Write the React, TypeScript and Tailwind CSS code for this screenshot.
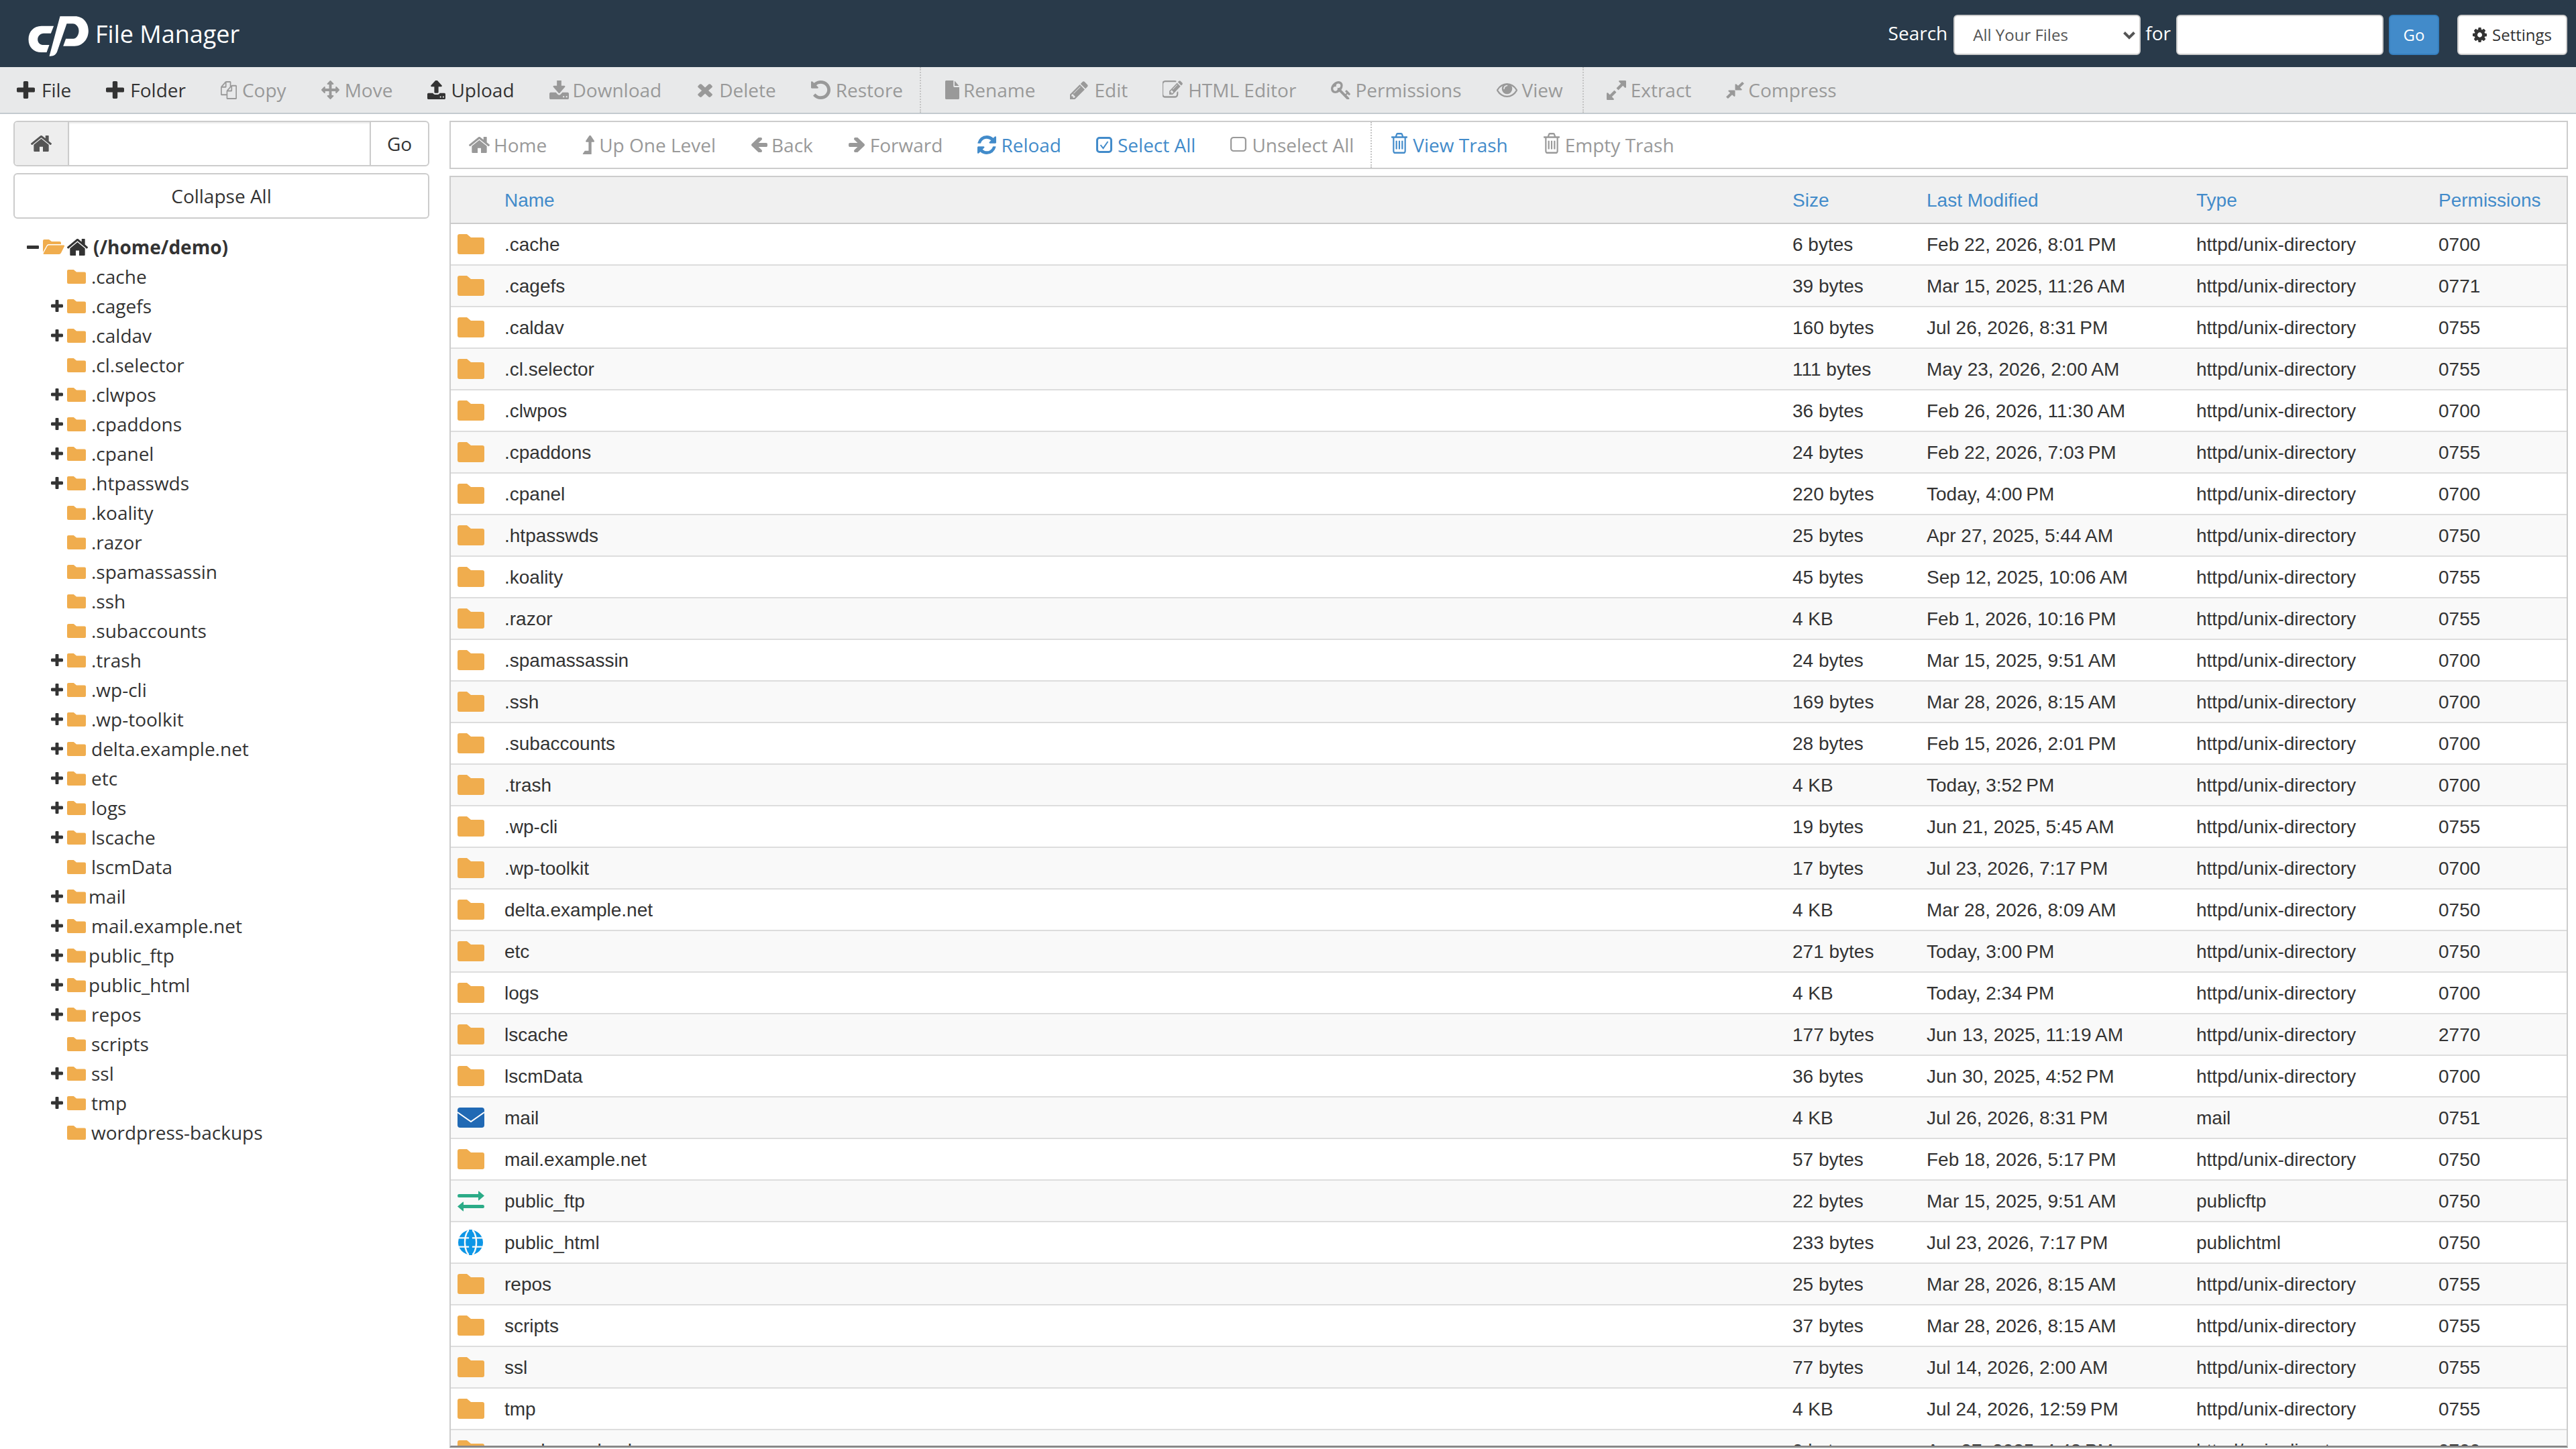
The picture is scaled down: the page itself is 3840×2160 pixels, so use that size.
const FOLDER = 'M0 3Q0 0 3 0H14L20 5H37Q40 5 40 8V27Q40 30 37 30H3Q0 30 0 27Z';

// Font Awesome 4 paths, each with a viewBox cropped tight to the glyph
const icons: Record<string, [string, string]> = {
  plus: ['192 128 1408 1408', 'M1600 736v192q0 40-28 68t-68 28h-416v416q0 40-28 68t-68 28h-192q-40 0-68-28t-28-68v-416h-416q-40 0-68-28t-28-68v-192q0-40 28-68t68-28h416v-416q0-40 28-68t68-28h192q40 0 68 28t28 68v416h416q40 0 68 28t28 68z'],
  copy: ['0 0 1792 1792', 'M1696 384q40 0 68 28t28 68v1216q0 40-28 68t-68 28h-960q-40 0-68-28t-28-68v-288h-544q-40 0-68-28t-28-68v-672q0-40 20-88t48-76l408-408q28-28 76-48t88-20h416q40 0 68 28t28 68v328q68-40 128-40h416zm-544 213l-299 299h299v-299zm-640-384l-299 299h299v-299zm196 647l316-316v-416h-384v416q0 40-28 68t-68 28h-416v640h512v-256q0-40 20-88t48-76zm956 804v-1152h-384v416q0 40-28 68t-68 28h-416v640h896z'],
  move: ['0 0 1792 1792', 'M1792 896q0 26-19 45l-256 256q-19 19-45 19t-45-19-19-45v-128h-384v384h128q26 0 45 19t19 45-19 45l-256 256q-19 19-45 19t-45-19l-256-256q-19-19-19-45t19-45 45-19h128v-384h-384v128q0 26-19 45t-45 19-45-19l-256-256q-19-19-19-45t19-45l256-256q19-19 45-19t45 19 19 45v128h384v-384h-128q-26 0-45-19t-19-45 19-45l256-256q19-19 45-19t45 19l256 256q19 19 19 45t-19 45-45 19h-128v384h384v-128q0-26 19-45t45-19 45 19l256 256q19 19 19 45z'],
  upload: ['64 128 1664 1536', 'M1344 1472q0-26-19-45t-45-19-45 19-19 45 19 45 45 19 45-19 19-45zm256 0q0-26-19-45t-45-19-45 19-19 45 19 45 45 19 45-19 19-45zm128-224v320q0 40-28 68t-68 28h-1472q-40 0-68-28t-28-68v-320q0-40 28-68t68-28h427q21 56 70.500 92t110.500 36h256q61 0 110.500-36t70.500-92h427q40 0 68 28t28 68zm-325-648q-17 40-59 40h-256v448q0 26-19 45t-45 19h-256q-26 0-45-19t-19-45v-448h-256q-42 0-59-40-17-39 14-69l448-448q18-19 45-19t45 19l448 448q31 30 14 69z'],
  download: ['64 128 1664 1408', 'M1344 1344q0-26-19-45t-45-19-45 19-19 45 19 45 45 19 45-19 19-45zm256 0q0-26-19-45t-45-19-45 19-19 45 19 45 45 19 45-19 19-45zm128-224v320q0 40-28 68t-68 28h-1472q-40 0-68-28t-28-68v-320q0-40 28-68t68-28h465l135 136q58 56 136 56t136-56l136-136h464q40 0 68 28t28 68zm-325-569q17 41-14 70l-448 448q-18 19-45 19t-45-19l-448-448q-31-29-14-70 17-39 59-39h256v-448q0-26 19-45t45-19h256q26 0 45 19t19 45v448h256q42 0 59 39z'],
  times: ['182 238 1310 1316', 'M1490 1322q0 40-28 68l-136 136q-28 28-68 28t-68-28l-294-294-294 294q-28 28-68 28t-68-28l-136-136q-28-28-28-68t28-68l294-294-294-294q-28-28-28-68t28-68l136-136q28-28 68-28t68 28l294 294 294-294q28-28 68-28t68 28l136 136q28 28 28 68t-28 68l-294 294 294 294q28 28 28 68z'],
  undo: ['128 128 1536 1536', 'M1664 896q0 156-61 298t-164 245-245 164-298 61q-172 0-327-72.500t-264-204.500q-7-10-6.500-22.500t8.500-20.500l137-138q10-9 25-9 16 2 23 12 73 95 179 147t225 52q104 0 198.500-40.500t163.500-109.500 109.500-163.500 40.500-198.500-40.500-198.500-109.500-163.500-163.500-109.500-198.500-40.500q-98 0-188 35.500t-160 101.500l137 138q31 30 14 69-17 40-59 40h-448q-26 0-45-19t-19-45v-448q0-42 40-59 39-17 69 14l130 129q107-101 244.500-156.500t284.500-55.500q156 0 298 61t245 164 164 245 61 298z'],
  file: ['128 0 1536 1792', 'M1152 512v-472q22 14 36 28l408 408q14 14 28 36h-472zm-128 32q0 40 28 68t68 28h544v1056q0 40-28 68t-68 28h-1344q-40 0-68-28t-28-68v-1600q0-40 28-68t68-28h800v544z'],
  pencil: ['128 128 1536 1536', 'M491 1536l91-91-235-235-91 91v107h128v128h107zm523-928q0-22-22-22-10 0-17 7l-542 542q-7 7-7 17 0 22 22 22 10 0 17-7l542-542q7-7 7-17zm-54-192l416 416-832 832h-416v-416zm683 96q0 53-37 90l-166 166-416-416 166-165q36-38 90-38 53 0 91 38l235 234q37 39 37 91z'],
  edit: ['64 128 1728 1536', 'M888 1184l116-116-152-152-116 116v56h96v96h56zm440-720q-16-16-33 1l-350 350q-17 17-1 33t33-1l350-350q17-17 1-33zm80 594v190q0 119-84.500 203.500t-203.500 84.500h-832q-119 0-203.500-84.500t-84.500-203.500v-832q0-119 84.500-203.500t203.500-84.500h832q63 0 117 25 15 7 18 23 3 17-9 29l-49 49q-14 14-32 8-23-6-45-6h-832q-66 0-113 47t-47 113v832q0 66 47 113t113 47h832q66 0 113-47t47-113v-126q0-13 9-22l64-64q15-15 35-7t20 29zm-96-738l288 288-672 672h-288v-288zm444 132l-92 92-288-288 92-92q28-28 68-28t68 28l152 152q28 28 28 68t-28 68z'],
  key: ['0 128 1683 1536', 'M832 512q0-80-56-136t-136-56-136 56-56 136q0 42 19 83-41-19-83-19-80 0-136 56t-56 136 56 136 136 56 136-56 56-136q0-42-19-83 41 19 83 19 80 0 136-56t56-136zm851 704q0 17-49 66t-66 49q-9 0-28.500-16t-36.500-33-38.500-40-24.500-26l-96 96 220 220q28 28 28 68 0 42-39 81t-81 39q-40 0-68-28l-671-671q-176 131-365 131-163 0-265.500-102.500t-102.500-265.500q0-160 95-313t248-248 313-95q163 0 265.500 102.500t102.500 265.500q0 189-131 365l355 355 96-96q-3-3-26-24.500t-40-38.500-33-36.500-16-28.500q0-17 49-66t66-49q13 0 23 10 6 6 46 44.500t82 79.500 86.500 86 73 78 28.500 41z'],
  eye: ['0 384 1792 1152', 'M1664 960q-152-236-381-353 61 104 61 225 0 185-131.500 316.500t-316.500 131.500-316.500-131.500-131.500-316.500q0-121 61-225-229 117-381 353 133 205 333.500 326.500t434.500 121.500 434.500-121.500 333.500-326.500zm-720-384q0-20-14-34t-34-14q-125 0-214.500 89.500t-89.500 214.500q0 20 14 34t34 14 34-14 14-34q0-86 61-147t147-61q20 0 34-14t14-34zm848 384q0 34-20 69-140 230-376.500 368.500t-499.500 138.500-499.500-139-376.500-368q-20-35-20-69t20-69q140-229 376.500-368t499.500-139 499.500 139 376.500 368q20 35 20 69z'],
  expand: ['128 128 1536 1536', 'M883 1056q0 13-10 23l-332 332 144 144q19 19 19 45t-19 45-45 19h-448q-26 0-45-19t-19-45v-448q0-26 19-45t45-19 45 19l144 144 332-332q10-10 23-10t23 10l114 114q10 10 10 23zm781-864v448q0 26-19 45t-45 19-45-19l-144-144-332 332q-10 10-23 10t-23-10l-114-114q-10-10-10-23t10-23l332-332-144-144q-19-19-19-45t19-45 45-19h448q26 0 45 19t19 45z'],
  compress: ['128 128 1536 1536', 'M896 960v448q0 26-19 45t-45 19-45-19l-144-144-332 332q-10 10-23 10t-23-10l-114-114q-10-10-10-23t10-23l332-332-144-144q-19-19-19-45t19-45 45-19h448q26 0 45 19t19 45zm755-672q0 13-10 23l-332 332 144 144q19 19 19 45t-19 45-45 19h-448q-26 0-45-19t-19-45v-448q0-26 19-45t45-19 45 19l144 144 332-332q10-10 23-10t23 10l114 114q10 10 10 23z'],
  home: ['97 256 1598 1280', 'M1472 992v480q0 26-19 45t-45 19h-384v-384h-256v384h-384q-26 0-45-19t-19-45v-480q0-1 .5-3t.5-3l575-474 575 474q1 2 1 6zm223-69l-62 74q-8 9-21 11h-3q-13 0-21-7l-692-577-692 577q-12 8-24 7-13-2-21-11l-62-74q-8-10-7-23.500t11-21.500l719-599q32-26 76-26t76 26l244 204v-195q0-14 9-23t23-9h192q14 0 23 9t9 23v408l219 182q10 8 11 21.500t-7 23.500z'],
  left: ['128 256 1536 1408', 'M1664 896v128q0 53-32.500 90.500t-84.500 37.500h-704l293 294q38 36 38 90t-38 90l-75 76q-37 37-90 37-52 0-91-37l-651-652q-37-37-37-90 0-52 37-91l651-650q38-38 91-38 52 0 90 38l75 74q38 38 38 91t-38 91l-293 293h704q52 0 84.500 37.500t32.500 90.500z'],
  right: ['64 256 1536 1408', 'M1600 960q0 54-37 91l-651 651q-39 37-91 37-51 0-90-37l-75-75q-38-38-38-91t38-91l293-293h-704q-52 0-84.500-37.500t-32.500-90.500v-128q0-53 32.500-90.500t84.500-37.500h704l-293-294q-38-36-38-90t38-90l75-75q38-38 90-38 53 0 91 38l651 651q37 35 37 90z'],
  up: ['270 64 1130 1376', 'M1395 508q-17 36-58 36h-192v864q0 14-9 23t-23 9h-704q-21 0-29-18-8-20 4-35l160-192q9-11 25-11h320v-640h-192q-40 0-58-37-17-37 9-68l320-384q18-22 49-22t49 22l320 384q27 32 9 69z'],
  refresh: ['128 128 1536 1536', 'M1639 1056q0 5-1 7-64 268-268 434.500t-478 166.500q-146 0-282.500-55t-243.500-157l-129 129q-19 19-45 19t-45-19-19-45v-448q0-26 19-45t45-19h448q26 0 45 19t19 45-19 45l-137 137q71 66 161 102t187 36q134 0 250-65t186-179q11-17 53-117 8-23 30-23h192q13 0 22.500 9.500t9.500 22.500zm25-800v448q0 26-19 45t-45 19h-448q-26 0-45-19t-19-45 19-45l138-138q-148-137-349-137-134 0-250 65t-186 179q-11 17-53 117-8 23-30 23h-199q-13 0-22.500-9.500t-9.500-22.500v-7q65-268 270-434.500t480-166.500q146 0 284 55.500t245 156.500l130-129q19-19 45-19t45 19 19 45z'],
  square: ['0 128 1408 1536', 'M1120 256h-832q-66 0-113 47t-47 113v832q0 66 47 113t113 47h832q66 0 113-47t47-113v-832q0-66-47-113t-113-47zm288 160v832q0 119-84.500 203.500t-203.500 84.500h-832q-119 0-203.500-84.500t-84.500-203.500v-832q0-119 84.500-203.500t203.500-84.500h832q119 0 203.500 84.500t84.500 203.500z'],
  trash: ['128 128 1536 1536', 'M704 736v576q0 14-9 23t-23 9h-64q-14 0-23-9t-9-23v-576q0-14 9-23t23-9h64q14 0 23 9t9 23zm256 0v576q0 14-9 23t-23 9h-64q-14 0-23-9t-9-23v-576q0-14 9-23t23-9h64q14 0 23 9t9 23zm256 0v576q0 14-9 23t-23 9h-64q-14 0-23-9t-9-23v-576q0-14 9-23t23-9h64q14 0 23 9t9 23zm128 724v-948h-896v948q0 22 7 40.500t14.500 27 10.500 8.500h832q3 0 10.500-8.500t14.500-27 7-40.500zm-672-1076h448l-48-117q-7-9-17-11h-317q-10 2-17 11zm928 32v64q0 14-9 23t-23 9h-96v948q0 83-47 143.500t-113 60.500h-832q-66 0-113-58.500t-47-141.500v-952h-96q-14 0-23-9t-9-23v-64q0-14 9-23t23-9h309l70-167q15-37 54-63t79-26h320q40 0 79 26t54 63l70 167h309q14 0 23 9t9 23z'],
  cog: ['128 128 1536 1536', 'M1152 896q0-106-75-181t-181-75-181 75-75 181 75 181 181 75 181-75 75-181zm512-109v222q0 12-8 23t-20 13l-185 28q-19 54-39 91 35 50 107 138 10 12 10 25t-9 23q-27 37-99 108t-94 71q-12 0-26-9l-138-108q-44 23-91 38-16 136-29 186-7 28-36 28h-222q-14 0-24.500-8.500t-11.500-21.500l-28-184q-49-16-90-37l-141 107q-10 9-25 9-14 0-25-11-126-114-165-168-7-10-7-23 0-12 8-23 15-21 51-66.500t54-70.500q-27-50-41-99l-183-27q-13-2-21-12.500t-8-23.500v-222q0-12 8-23t19-13l186-28q14-46 39-92-40-57-107-138-10-12-10-24 0-10 9-23 26-36 98.500-107.500t94.500-71.500q13 0 26 10l138 107q44-23 91-38 16-136 29-186 7-28 36-28h222q14 0 24.500 8.500t11.500 21.500l28 184q49 16 90 37l142-107q9-9 24-9 13 0 25 10 129 119 165 170 7 8 7 22 0 12-8 23-15 21-51 66.500t-54 70.500q26 50 41 98l183 28q13 2 21 12.500t8 23.500z'],
};

function Fa({ name, className }: { name: string; className?: string }) {
  const [box, d] = icons[name];
  return (
    <svg viewBox={box} preserveAspectRatio="none" className={`shrink-0 ${className ?? ''}`} fill="currentColor">
      <path d={d} />
    </svg>
  );
}

function CheckBox({ className }: { className?: string }) {
  return (
    <svg viewBox="0 0 24 24" className={`shrink-0 ${className ?? ''}`} fill="none" stroke="currentColor">
      <rect x="1.5" y="1.5" width="21" height="21" rx="3.500" strokeWidth="3" />
      <path d="M6.500 12l4 5 7-10" strokeWidth="2" />
    </svg>
  );
}

function Folder({ className }: { className?: string }) {
  return (
    <svg viewBox="0 0 40 30" className={`shrink-0 ${className ?? ''}`} fill="#f0ad4e">
      <path d={FOLDER} />
    </svg>
  );
}

function FolderOpen({ className }: { className?: string }) {
  return (
    <svg viewBox="0 0 32 22" className={className} fill="#f0ad4e">
      <path d="M0 2Q0 0 2 0H9L13 3H25Q27 3 27 5V7H9Q6 7 5 10L0 19Z" />
      <path d="M6.500 10Q7 8.500 9 8.500H31Q32.500 8.500 32 10L27 20Q26 22 24 22H2Q0 22 .8 20.500Z" />
    </svg>
  );
}

function Logo() {
  return (
    <svg viewBox="30 20 290 195" className="mt-[8px] h-[65px] w-[97px]" fill="#fff">
      <path d="M150 70L95 70C60 70 37 95 37 130C37 165 60 188 95 188L118 188L130 155L105 155C88 155 78 144 78 130C78 115 90 103 105 103L137 103Z" />
      <path d="M178 27L245 27C280 27 305 55 305 92C305 130 278 160 243 160L192 160L204 127L237 127C252 127 262 110 262 92C262 75 250 60 235 60L208 60L165 185C160 198 150 205 135 205L130 205Z" />
    </svg>
  );
}

type ToolItem = { icon: string; label: string; size: string; active?: boolean; tone?: string };

const actions: { pad: string; items: ToolItem[] }[] = [
  {
    pad: 'pl-[25px] pr-[25px]',
    items: [
      { icon: 'plus', label: 'File', size: 'h-[26px] w-[27px] mr-[10px]', active: true },
      { icon: 'plus', label: 'Folder', size: 'h-[26px] w-[27px] mr-[9px]', active: true },
      { icon: 'copy', label: 'Copy', size: 'h-[27px] w-[24px] mr-[8px]' },
      { icon: 'move', label: 'Move', size: 'h-[28px] w-[27px] mr-[8px]' },
      { icon: 'upload', label: 'Upload', size: 'h-[28px] w-[27px] mr-[8px]', active: true },
      { icon: 'download', label: 'Download', size: 'h-[28px] w-[29px] mr-[6px]' },
      { icon: 'times', label: 'Delete', size: 'h-[22px] w-[24px] mr-[10px]' },
      { icon: 'undo', label: 'Restore', size: 'h-[28px] w-[29px] mr-[8px]' },
    ],
  },
  {
    pad: 'pl-[36px] pr-[29px]',
    items: [
      { icon: 'file', label: 'Rename', size: 'h-[28px] w-[21px] mr-[6px]' },
      { icon: 'pencil', label: 'Edit', size: 'h-[27px] w-[27px] mr-[9px]' },
      { icon: 'edit', label: 'HTML Editor', size: 'h-[28px] w-[30px] mr-[8px]' },
      { icon: 'key', label: 'Permissions', size: 'h-[27px] w-[29px] mr-[7px]' },
      { icon: 'eye', label: 'View', size: 'h-[21px] w-[31px] mr-[7px]' },
    ],
  },
  {
    pad: 'pl-[34px]',
    items: [
      { icon: 'expand', label: 'Extract', size: 'h-[29px] w-[29px] mr-[7px]' },
      { icon: 'compress', label: 'Compress', size: 'h-[25px] w-[27px] mr-[6px]' },
    ],
  },
];

const BLUE = 'text-[#428bca]';

const navLeft: ToolItem[] = [
  { icon: 'home', label: 'Home', size: 'h-[24px] w-[31px] mr-[6px]' },
  { icon: 'up', label: 'Up One Level', size: 'h-[28px] w-[19px] mr-[7px]' },
  { icon: 'left', label: 'Back', size: 'h-[22px] w-[25px] mr-[6px]' },
  { icon: 'right', label: 'Forward', size: 'h-[22px] w-[25px] mr-[8px]' },
  { icon: 'refresh', label: 'Reload', size: 'h-[28px] w-[28px] mr-[7px]', tone: BLUE },
  { icon: 'check', label: 'Select All', size: 'h-[24px] w-[24px] mr-[8px]', tone: BLUE },
  { icon: 'square', label: 'Unselect All', size: 'h-[24px] w-[24px] mr-[8px]' },
];

const navRight: ToolItem[] = [
  { icon: 'trash', label: 'View Trash', size: 'h-[31px] w-[26px] mr-[7px] -mt-[5px]', tone: BLUE },
  { icon: 'trash', label: 'Empty Trash', size: 'h-[31px] w-[26px] mr-[7px] -mt-[5px]' },
];

type TreeItem = { name: string; more?: boolean; tight?: boolean };

const tree: TreeItem[] = [
  { name: '.cache' },
  { name: '.cagefs', more: true },
  { name: '.caldav', more: true },
  { name: '.cl.selector' },
  { name: '.clwpos', more: true },
  { name: '.cpaddons', more: true },
  { name: '.cpanel', more: true },
  { name: '.htpasswds', more: true },
  { name: '.koality' },
  { name: '.razor' },
  { name: '.spamassassin' },
  { name: '.ssh' },
  { name: '.subaccounts' },
  { name: '.trash', more: true },
  { name: '.wp-cli', more: true },
  { name: '.wp-toolkit', more: true },
  { name: 'delta.example.net', more: true },
  { name: 'etc', more: true },
  { name: 'logs', more: true },
  { name: 'lscache', more: true },
  { name: 'lscmData' },
  { name: 'mail', more: true, tight: true },
  { name: 'mail.example.net', more: true },
  { name: 'public_ftp', more: true, tight: true },
  { name: 'public_html', more: true, tight: true },
  { name: 'repos', more: true },
  { name: 'scripts' },
  { name: 'ssl', more: true },
  { name: 'tmp', more: true },
  { name: 'wordpress-backups' },
];

const DIR = 'httpd/unix-directory';

const files: [string, string, string, string, string][] = [
  ['.cache', '6 bytes', 'Feb 22, 2026, 8:01 PM', DIR, '0700'],
  ['.cagefs', '39 bytes', 'Mar 15, 2025, 11:26 AM', DIR, '0771'],
  ['.caldav', '160 bytes', 'Jul 26, 2026, 8:31 PM', DIR, '0755'],
  ['.cl.selector', '111 bytes', 'May 23, 2026, 2:00 AM', DIR, '0755'],
  ['.clwpos', '36 bytes', 'Feb 26, 2026, 11:30 AM', DIR, '0700'],
  ['.cpaddons', '24 bytes', 'Feb 22, 2026, 7:03 PM', DIR, '0755'],
  ['.cpanel', '220 bytes', 'Today, 4:00 PM', DIR, '0700'],
  ['.htpasswds', '25 bytes', 'Apr 27, 2025, 5:44 AM', DIR, '0750'],
  ['.koality', '45 bytes', 'Sep 12, 2025, 10:06 AM', DIR, '0755'],
  ['.razor', '4 KB', 'Feb 1, 2026, 10:16 PM', DIR, '0755'],
  ['.spamassassin', '24 bytes', 'Mar 15, 2025, 9:51 AM', DIR, '0700'],
  ['.ssh', '169 bytes', 'Mar 28, 2026, 8:15 AM', DIR, '0700'],
  ['.subaccounts', '28 bytes', 'Feb 15, 2026, 2:01 PM', DIR, '0700'],
  ['.trash', '4 KB', 'Today, 3:52 PM', DIR, '0700'],
  ['.wp-cli', '19 bytes', 'Jun 21, 2025, 5:45 AM', DIR, '0755'],
  ['.wp-toolkit', '17 bytes', 'Jul 23, 2026, 7:17 PM', DIR, '0700'],
  ['delta.example.net', '4 KB', 'Mar 28, 2026, 8:09 AM', DIR, '0750'],
  ['etc', '271 bytes', 'Today, 3:00 PM', DIR, '0750'],
  ['logs', '4 KB', 'Today, 2:34 PM', DIR, '0700'],
  ['lscache', '177 bytes', 'Jun 13, 2025, 11:19 AM', DIR, '2770'],
  ['lscmData', '36 bytes', 'Jun 30, 2025, 4:52 PM', DIR, '0700'],
  ['mail', '4 KB', 'Jul 26, 2026, 8:31 PM', 'mail', '0751'],
  ['mail.example.net', '57 bytes', 'Feb 18, 2026, 5:17 PM', DIR, '0750'],
  ['public_ftp', '22 bytes', 'Mar 15, 2025, 9:51 AM', 'publicftp', '0750'],
  ['public_html', '233 bytes', 'Jul 23, 2026, 7:17 PM', 'publichtml', '0750'],
  ['repos', '25 bytes', 'Mar 28, 2026, 8:15 AM', DIR, '0755'],
  ['scripts', '37 bytes', 'Mar 28, 2026, 8:15 AM', DIR, '0755'],
  ['ssl', '77 bytes', 'Jul 14, 2026, 2:00 AM', DIR, '0755'],
  ['tmp', '4 KB', 'Jul 24, 2026, 12:59 PM', DIR, '0755'],
  ['wordpress-backups', '0 bytes', 'Apr 27, 2025, 4:48 PM', DIR, '0700'],
];

function RowIcon({ name }: { name: string }) {
  if (name === 'mail') {
    return (
      <svg viewBox="0 0 40 30" className="h-[30px] w-[40px]">
        <rect width="40" height="30" rx="4" fill="#2069b4" />
        <path d="M0 7L20 21L40 7" fill="none" stroke="#fff" strokeWidth="2" />
      </svg>
    );
  }
  if (name === 'public_ftp') {
    return (
      <svg viewBox="0 0 40 31" className="h-[31px] w-[40px]" fill="#2bab87">
        <path d="M2 5H31V1Q31 0 32 .8L40 7.500L32 14.200Q31 15 31 14V10H2Q0 10 0 7.500T2 5Z" />
        <path d="M38 21H9V17Q9 16 8 16.800L0 23.500L8 30.200Q9 31 9 30V26H38Q40 26 40 23.500T38 21Z" />
      </svg>
    );
  }
  if (name === 'public_html') {
    return (
      <svg viewBox="0 0 40 40" className="h-[38px] w-[39px]">
        <circle cx="20" cy="20" r="19.500" fill="#0d96e6" />
        <g fill="none" stroke="#f9f9f9" strokeWidth="2.500">
          <ellipse cx="20" cy="20" rx="9" ry="20" />
          <path d="M1 13H39M1 27H39" />
        </g>
        <path d="M20 0V40" stroke="#0d96e6" strokeWidth="5" />
      </svg>
    );
  }
  return <Folder className="h-[30px] w-[40px]" />;
}

function ToolRow({ items }: { items: ToolItem[] }) {
  return (
    <>
      {items.map((item) => (
        <div
          key={item.label}
          className={`flex items-center ${item.tone ?? (item.active ? 'text-[#333]' : 'text-[#999]')}`}
        >
          {item.icon === 'check' ? (
            <CheckBox className={item.size} />
          ) : (
            <Fa name={item.icon} className={item.size} />
          )}
          {item.label}
        </div>
      ))}
    </>
  );
}

export default function App() {
  return (
    <div className="flex h-[2160px] w-[3840px] flex-col overflow-hidden bg-white font-['Open_Sans',sans-serif] text-[#333]">
      <header className="flex h-[100px] shrink-0 items-center bg-[#293a4a] pl-[40px] pr-[13px] text-white">
        <Logo />
        <span className="ml-[5px] mt-[2px] text-[36px] leading-none">File Manager</span>
        <div className="ml-auto mt-[4px] flex items-center">
          <span className="-mt-[6px] text-[28px]">Search</span>
          <div className="relative ml-[9px] flex h-[60px] w-[279px] items-center rounded-[6px] border-2 border-[#ccc] bg-white pl-[27px] text-[24px] text-[#555]">
            All Your Files
            <svg viewBox="0 0 18 12" className="absolute right-[6px] top-[23px] h-[12px] w-[18px]" fill="none" stroke="#555" strokeWidth="4">
              <path d="M1.500 1.500L9 9L16.500 1.500" />
            </svg>
          </div>
          <span className="-mt-[6px] ml-[7px] text-[28px]">for</span>
          <div className="ml-[8px] h-[60px] w-[309px] rounded-[6px] border-2 border-[#ccc] bg-white"></div>
          <button className="ml-[8px] h-[60px] w-[75px] rounded-[6px] border-2 border-[#357ebd] bg-[#428bca] text-[24px] text-white">
            Go
          </button>
          <button className="ml-[27px] flex h-[60px] w-[164px] items-center justify-center gap-[8px] rounded-[6px] border-2 border-[#ccc] bg-white text-[24px] text-[#333]">
            <Fa name="cog" className="h-[22px] w-[21px]" />
            Settings
          </button>
        </div>
      </header>

      <nav className="flex h-[70px] shrink-0 border-b-2 border-[#c3cacf] bg-[#e8e9ea] text-[28px]">
        {actions.map((group, i) => (
          <div
            key={i}
            className={`flex items-center gap-[52px] ${group.pad} ${i > 0 ? 'border-l-2 border-dotted border-[#c4c4c4]' : ''}`}
          >
            <ToolRow items={group.items} />
          </div>
        ))}
      </nav>

      <div className="flex min-h-0 flex-1 pb-[2px] pt-[10px]">
        <aside className="ml-[20px] w-[620px] shrink-0">
          <div className="flex h-[68px] overflow-hidden rounded-[6px] border-2 border-[#ccc] text-[28px]">
            <div className="flex w-[81px] items-center justify-center border-r-2 border-[#ccc] bg-[#eee] text-[#555]">
              <Fa name="home" className="h-[24px] w-[31px]" />
            </div>
            <div className="flex-1 shadow-[inset_0_2px_2px_rgba(0,0,0,0.08)]"></div>
            <div className="flex w-[87px] items-center justify-center border-l-2 border-[#ccc]">Go</div>
          </div>
          <div className="mt-[10px] flex h-[68px] items-center justify-center rounded-[6px] border-2 border-[#ccc] text-[28px]">
            Collapse All
          </div>
          <div className="mt-[20px] text-[28px]">
            <div className="flex h-[44px] items-center pl-[20px] font-bold">
              <div className="h-[5px] w-[18px] rounded-[1px] bg-[#333]"></div>
              <FolderOpen className="ml-[6px] h-[22px] w-[32px]" />
              <Fa name="home" className="ml-[4px] h-[25px] w-[31px]" />
              <span className="ml-[8px]">(/home/demo)</span>
            </div>
            {tree.map((item) => (
              <div key={item.name} className="flex h-[44px] items-center pl-[56px]">
                <div className="flex w-[24px]">
                  {item.more && <Fa name="plus" className="h-[18px] w-[18px]" />}
                </div>
                <Folder className="h-[21px] w-[28px]" />
                <span className={item.tight ? 'ml-[4px]' : 'ml-[8px]'}>{item.name}</span>
              </div>
            ))}
          </div>
        </aside>

        <main className="ml-[30px] mr-[12px] flex min-w-0 flex-1 flex-col">
          <div className="flex h-[72px] shrink-0 border-2 border-[#ccc] text-[28px]">
            <div className="flex items-center gap-[52px] pl-[27px] pr-[25px]">
              <ToolRow items={navLeft} />
            </div>
            <div className="flex items-center gap-[52px] border-l-2 border-dotted border-[#c4c4c4] pl-[28px]">
              <ToolRow items={navRight} />
            </div>
          </div>

          <div className="mt-[10px] min-h-0 flex-1 overflow-hidden border-x-2 border-b-[3px] border-t-2 border-x-[#ccc] border-b-[#888] border-t-[#ccc] font-['Liberation_Sans',sans-serif] text-[28px]">
            <table className="w-full table-fixed border-collapse">
              <colgroup>
                <col className="w-[80px]" />
                <col />
                <col className="w-[200px]" />
                <col className="w-[402px]" />
                <col className="w-[361px]" />
                <col className="w-[191px]" />
              </colgroup>
              <thead>
                <tr className="h-[69px] border-b-2 border-[#ccc] bg-[#f0f0f0] text-left text-[#428bca]">
                  <th className="p-0"></th>
                  <th className="p-0 pt-[1px] font-normal">Name</th>
                  <th className="p-0 pt-[1px] font-normal">Size</th>
                  <th className="p-0 pt-[1px] font-normal">Last Modified</th>
                  <th className="p-0 pt-[1px] font-normal">Type</th>
                  <th className="p-0 pt-[1px] font-normal">Permissions</th>
                </tr>
              </thead>
              <tbody>
                {files.map((row, i) => (
                  <tr key={row[0]} className={`h-[62px] border-b-2 border-[#ddd] ${i % 2 ? 'bg-[#f9f9f9]' : 'bg-white'}`}>
                    <td className="p-0 pl-[10px] align-middle">
                      <div className="flex items-center">
                        <RowIcon name={row[0]} />
                      </div>
                    </td>
                    <td className="p-0 pt-[2px]">{row[0]}</td>
                    <td className="p-0 pt-[2px]">{row[1]}</td>
                    <td className="p-0 pt-[2px]">{row[2].replace(/ (AM|PM)/, '\u202f$1')}</td>
                    <td className="p-0 pt-[2px]">{row[3]}</td>
                    <td className="p-0 pt-[2px]">{row[4]}</td>
                  </tr>
                ))}
              </tbody>
            </table>
          </div>
        </main>
      </div>
    </div>
  );
}
